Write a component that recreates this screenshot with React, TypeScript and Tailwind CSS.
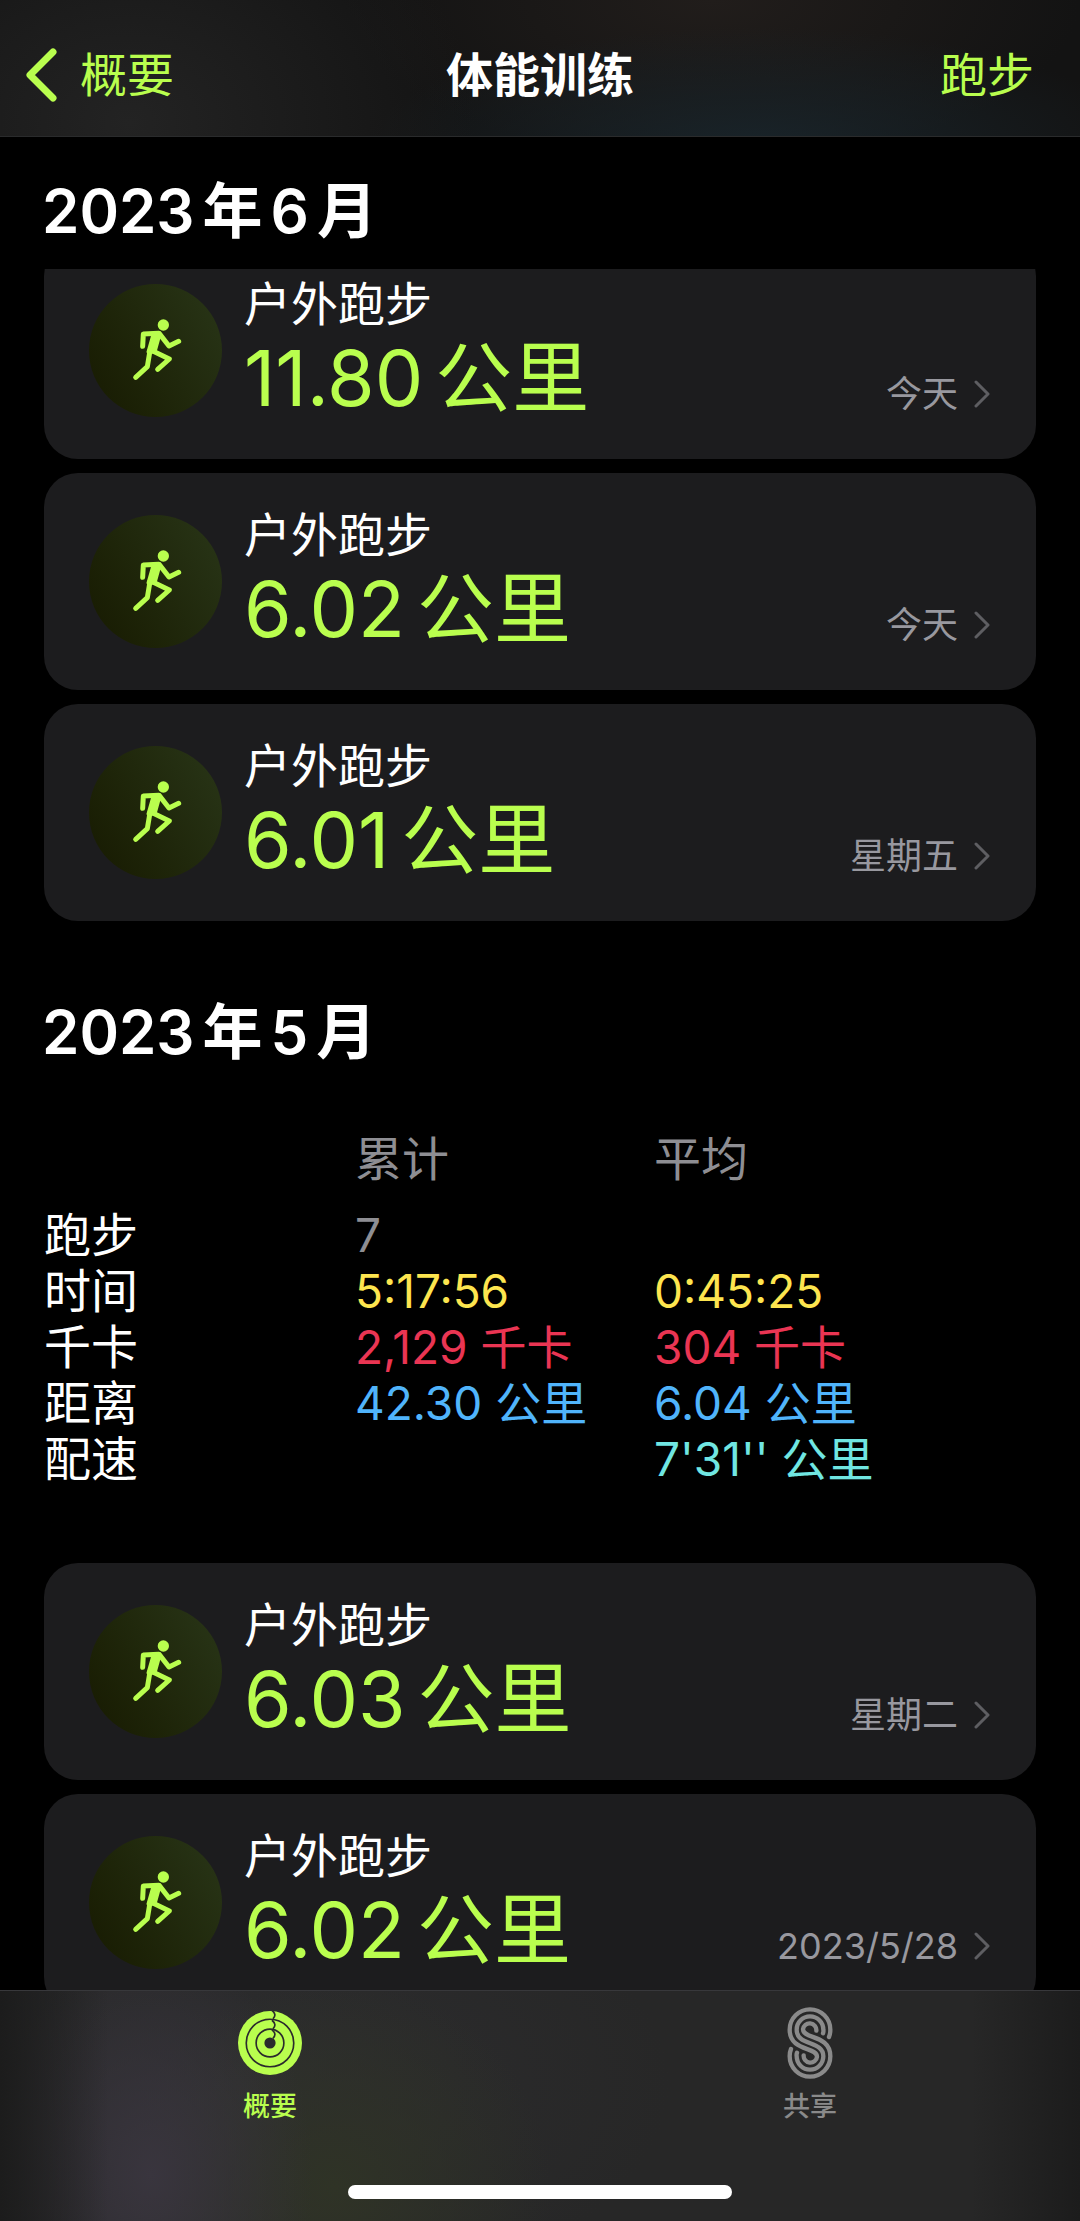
type Workout = {
  id: number;
  distance: string;
  date: string;
};

type SummaryRow = {
  label: string;
  total: string;
  average: string;
  color: string;
};

const juneWorkouts: Workout[] = [
  { id: 1, distance: '11.80', date: '今天' },
  { id: 2, distance: '6.02', date: '今天' },
  { id: 3, distance: '6.01', date: '星期五' },
];

const mayWorkouts: Workout[] = [
  { id: 4, distance: '6.03', date: '星期二' },
  { id: 5, distance: '6.02', date: '2023/5/28' },
];

const maySummary: SummaryRow[] = [
  { label: '跑步', total: '7', average: '', color: 'text-[#8e8e93]' },
  { label: '时间', total: '5:17:56', average: '0:45:25', color: 'text-[#fde54f]' },
  { label: '千卡', total: '2,129 千卡', average: '304 千卡', color: 'text-[#ea3553]' },
  { label: '距离', total: '42.30 公里', average: '6.04 公里', color: 'text-[#50b4fb]' },
  { label: '配速', total: '', average: "7'31'' 公里", color: 'text-[#70e6e2]' },
];

function RunnerIcon() {
  return (
    <svg
      viewBox="0 0 399 399"
      className="size-full"
      fill="none"
      stroke="#b9fe4e"
      strokeWidth="15"
      strokeLinecap="round"
      strokeLinejoin="round"
      aria-hidden="true"
    >
      <circle cx="223" cy="123" r="17" fill="#b9fe4e" stroke="none" />
      <path d="M161 187l2-37 46-2" />
      <path d="M211 149l29 37 29-14" />
      <path d="M194 148l18 2-15 54-19 0z" fill="#b9fe4e" strokeWidth="11" />
      <path d="M183 200l-8 48-35 32" />
      <path d="M196 203l45 22-35 31" />
    </svg>
  );
}

function RingsIcon() {
  return (
    <svg viewBox="0 0 194 194" className="size-16" fill="none" aria-hidden="true">
      <circle cx="97" cy="97" r="97" fill="#b9fe4e" />
      <g stroke="#2b2b2d" strokeWidth="5">
        <circle cx="97" cy="97" r="72" />
        <circle cx="97" cy="97" r="42" />
        <path d="M103 -2q16 13 3 26M103 28q16 13 3 26M103 57q16 13 3 26" />
      </g>
      <circle cx="97" cy="97" r="17" fill="#2b2b2d" />
    </svg>
  );
}

function SharingIcon() {
  return (
    <svg
      viewBox="138 81 136 216"
      className="h-[72px] w-[46px]"
      fill="none"
      stroke="#8a8a8a"
      strokeWidth="13"
      strokeLinecap="round"
      aria-hidden="true"
    >
      <path d="M263 171Q267 162 267 149A61 61 0 0 0 145 149C145 215 227 200 227 230A20 20 0 0 1 187 226" />
      <path d="M245 160Q247 155 246 149A40 40 0 0 0 166 149C166 200 246 180 246 229A40 40 0 0 1 166 229Q165 223 167 218" />
      <path d="M225 152A20 20 0 0 0 185 148C185 178 267 163 267 229A61 61 0 0 1 145 229Q145 216 149 207" />
    </svg>
  );
}

function MonthHeading({ year, month }: { year: string; month: string }) {
  return (
    <h2 className="sticky top-0 z-10 flex h-[132px] items-center gap-2 bg-black px-[42px] pt-4 text-[60px] leading-[72px] font-semibold text-white">
      <span>{year}</span>
      <span>年</span>
      <span>{month}</span>
      <span>月</span>
    </h2>
  );
}

function WorkoutCard({ workout }: { workout: Workout }) {
  return (
    <li>
      <a
        href="#"
        className="flex items-center rounded-[34px] bg-[#1c1c1e] pt-[34px] pr-[46px] pb-[35px] pl-[45px]"
      >
        <span className="size-[133px] shrink-0 rounded-full bg-linear-60 from-[#171a02] to-[#293618]">
          <RunnerIcon />
        </span>
        <span className="ml-[22px] flex-1">
          <span className="block text-[47px] leading-[56px] text-white">户外跑步</span>
          <span className="flex items-center gap-3 text-[77px] leading-[92px] text-[#b9fe4e]">
            <span>{workout.distance}</span>
            <span>公里</span>
          </span>
        </span>
        <span className="mb-1.5 flex items-center gap-4 self-end text-[36px] leading-[48px] text-[#98989f]">
          {workout.date}
          <svg
            viewBox="0 0 16 28"
            className="h-7 w-4"
            fill="none"
            stroke="#5e5e62"
            strokeWidth="3"
            strokeLinecap="round"
            strokeLinejoin="round"
            aria-hidden="true"
          >
            <path d="M2 2l12 12L2 26" />
          </svg>
        </span>
      </a>
    </li>
  );
}

function SummaryTable({ rows }: { rows: SummaryRow[] }) {
  return (
    <table className="mx-11 mt-[41px] mb-[76px] table-fixed text-left text-[46px] leading-[56px]">
      <thead className="text-[#8e8e93]">
        <tr>
          <td className="w-[311px] pb-5"></td>
          <th scope="col" className="w-[299px] pb-5 text-[47px] font-normal">累计</th>
          <th scope="col" className="pb-5 text-[47px] font-normal">平均</th>
        </tr>
      </thead>
      <tbody>
        {rows.map((row) => (
          <tr key={row.label} className={row.color}>
            <th scope="row" className="text-[47px] font-normal text-white">{row.label}</th>
            <td className="whitespace-nowrap">{row.total}</td>
            <td className="whitespace-nowrap">{row.average}</td>
          </tr>
        ))}
      </tbody>
    </table>
  );
}

export default function App() {
  return (
    <div className="flex h-screen flex-col bg-black font-['Inter','Noto_Sans_CJK_SC',sans-serif]">
      <header className="grid grid-cols-3 items-center border-b border-[#2a2b2c] bg-[#131313] bg-[radial-gradient(32%_200%_at_12%_90%,#232323,transparent),radial-gradient(36%_90%_at_70%_110%,#19242a,transparent),radial-gradient(34%_120%_at_66%_0%,#211d1b,transparent)] px-6 pt-[43px] pb-[29px] text-[47px] leading-[64px] text-[#b9fe4e]">
        <a href="#" className="flex items-center gap-[22px]">
          <svg
            viewBox="0 0 34 54"
            className="h-[54px] w-[34px]"
            fill="none"
            stroke="currentColor"
            strokeWidth="7"
            strokeLinecap="round"
            strokeLinejoin="round"
            aria-hidden="true"
          >
            <path d="M29 4L6 27l23 23" />
          </svg>
          概要
        </a>
        <h1 className="text-center font-semibold text-white">体能训练</h1>
        <button type="button" className="mr-[22px] justify-self-end">跑步</button>
      </header>

      <main className="min-h-0 flex-1 overflow-y-auto [scrollbar-width:none]">
        <section>
          <MonthHeading year="2023" month="6" />
          <ul className="-mt-[27px] flex flex-col gap-[14px] px-11">
            {juneWorkouts.map((w) => (
              <WorkoutCard key={w.id} workout={w} />
            ))}
          </ul>
        </section>

        <section className="mt-[37px]">
          <MonthHeading year="2023" month="5" />
          <SummaryTable rows={maySummary} />
          <ul className="flex flex-col gap-[14px] px-11">
            {mayWorkouts.map((w) => (
              <WorkoutCard key={w.id} workout={w} />
            ))}
          </ul>
        </section>
      </main>

      <footer className="border-t border-[#38383b] bg-[#272727] bg-[linear-gradient(to_right,#1c1c1c,transparent_10%,transparent_90%,#1c1c1c),radial-gradient(15%_100%_at_14%_80%,#39353e,transparent),radial-gradient(20%_90%_at_31%_85%,#2f3326,transparent),radial-gradient(40%_100%_at_22%_40%,#2d2d2f,transparent)]">
        <nav className="grid grid-cols-2 pt-4 text-[27px] leading-9 font-medium">
          <a href="#" className="flex flex-col items-center gap-[10px] text-[#b9fe4e]">
            <span className="flex h-[72px] items-center">
              <RingsIcon />
            </span>
            概要
          </a>
          <a href="#" className="flex flex-col items-center gap-[10px] text-[#8a8a8a]">
            <SharingIcon />
            共享
          </a>
        </nav>
        <div className="mx-auto mt-[60px] mb-[22px] h-[14px] w-96 rounded-full bg-white" />
      </footer>
    </div>
  );
}
